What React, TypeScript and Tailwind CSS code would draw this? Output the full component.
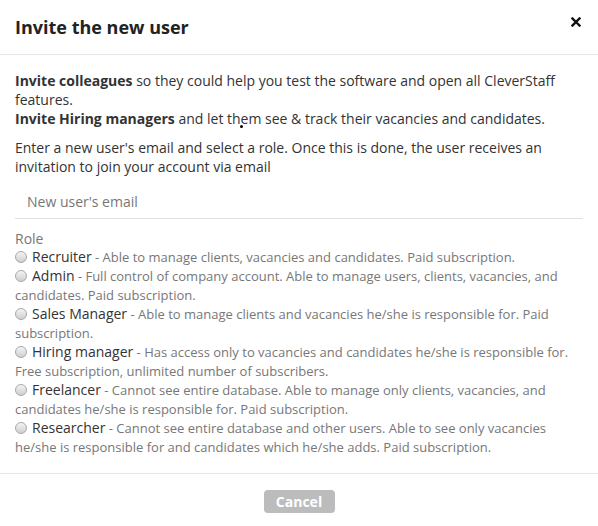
import React from "react";

const roles = [
  { name: "Recruiter", desc: "Able to manage clients, vacancies and candidates. Paid subscription." },
  { name: "Admin", desc: "Full control of company account. Able to manage users, clients, vacancies, and candidates. Paid subscription." },
  { name: "Sales Manager", desc: "Able to manage clients and vacancies he/she is responsible for. Paid subscription." },
  { name: "Hiring manager", desc: "Has access only to vacancies and candidates he/she is responsible for. Free subscription, unlimited number of subscribers." },
  { name: "Freelancer", desc: "Cannot see entire database. Able to manage only clients, vacancies, and candidates he/she is responsible for. Paid subscription." },
  { name: "Researcher", desc: "Cannot see entire database and other users. Able to see only vacancies he/she is responsible for and candidates which he/she adds. Paid subscription." },
];

function Radio() {
  return (
    <span className="inline-block w-[12px] h-[12px] rounded-full border border-[#a9a9a9] bg-gradient-to-b from-[#f4f4f4] to-[#cfcfcf] align-[-1px] mr-[5px]" />
  );
}

export default function App() {
  return (
    <div className="relative w-[598px] h-[526px] bg-white text-[#333] font-['Open_Sans',sans-serif]">
      <div className="flex items-center justify-between h-[55px] px-[15px] border-b border-[#e5e5e5]">
        <h4 className="text-[18px] font-bold text-[#222] leading-[24px] -mt-[1px]">Invite the new user</h4>
        <svg width="10" height="10" viewBox="0 0 10 10" className="mr-[2px] -mt-[10px]">
          <path d="M1.5 1.5 L8.5 8.5 M8.5 1.5 L1.5 8.5" stroke="#111" strokeWidth="2.4" strokeLinecap="square" />
        </svg>
      </div>
      <div className="px-[15px] pt-[16px] pb-[17px] text-[14px] leading-[19px] border-b border-[#e5e5e5]">
        <p>
          <b className="font-bold">Invite colleagues</b> so they could help you test the software and open all CleverStaff features.
          <br />
          <b className="font-bold">Invite Hiring managers</b> and let them see &amp; track their vacancies and candidates.
        </p>
        <p className="mt-[10px]">
          Enter a new user's email and select a role. Once this is done, the user receives an invitation to join your account via email
        </p>
        <div className="mt-[8px] h-[35px] border-b border-[#e0e0e0] flex items-center px-[12px] text-[#777]">
          New user's email
        </div>
        <div className="mt-[11px] text-[#777] leading-[17px]">Role</div>
        {roles.map((r) => (
          <div key={r.name} className="leading-[19px]">
            <Radio />
            <span className="text-[#333] leading-none">{r.name}</span>
            <span className="text-[13px] text-[#777] leading-none"> - {r.desc}</span>
          </div>
        ))}
      </div>
      <div className="flex justify-center pt-[16px]">
        <button className="h-[23px] w-[71px] rounded-[4px] bg-[#bcbcbc] text-white font-bold text-[14px] leading-[23px]">
          Cancel
        </button>
      </div>
      <div className="absolute left-[240px] top-[125px] w-[3px] h-[3px] rounded-full bg-black" />
    </div>
  );
}
